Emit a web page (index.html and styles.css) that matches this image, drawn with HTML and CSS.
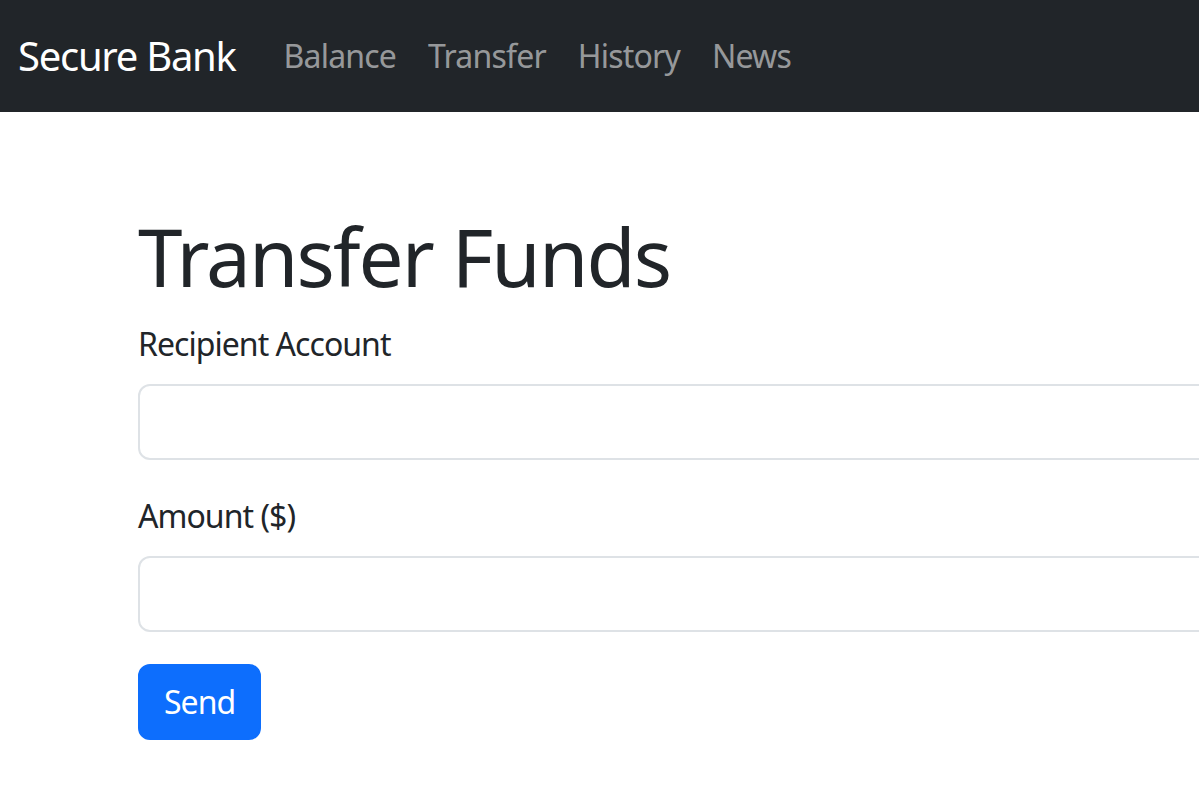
FILE: index.html
```html
<!DOCTYPE html>
<html lang="en">
<head>
<meta charset="utf-8">
<title>Secure Bank - Transfer</title>
<link rel="stylesheet" href="styles.css">
</head>
<body>
<nav class="navbar">
  <a class="brand" href="#">Secure Bank</a>
  <ul class="nav">
    <li><a class="nav-link" href="#">Balance</a></li>
    <li><a class="nav-link" href="#">Transfer</a></li>
    <li><a class="nav-link" href="#">History</a></li>
    <li><a class="nav-link" href="#">News</a></li>
  </ul>
</nav>
<main class="container">
  <h1 class="title">Transfer Funds</h1>
  <form class="form">
    <div class="field">
      <label class="label" for="recipient">Recipient Account</label>
      <input class="control" id="recipient" type="text">
    </div>
    <div class="field">
      <label class="label" for="amount">Amount ($)</label>
      <input class="control" id="amount" type="text">
    </div>
    <button class="btn" type="submit">Send</button>
  </form>
</main>
</body>
</html>
```
FILE: styles.css
```css
html, body {
  margin: 0;
  padding: 0;
  overflow: hidden;
}
body {
  font-family: "Noto Sans", "Open Sans", sans-serif;
  letter-spacing: -0.025em;
  color: #212529;
  background: #fff;
  width: 1199px;
}
.navbar {
  background: #212529;
  height: 112px;
  display: flex;
  align-items: center;
  padding: 0 18px;
  box-sizing: border-box;
}
.brand {
  color: #fff;
  text-decoration: none;
  font-size: 40px;
  line-height: 60px;
  margin-right: 32px;
  letter-spacing: -0.032em;
}
.nav {
  list-style: none;
  margin: 0;
  padding: 0;
  display: flex;
}
.nav-link {
  display: block;
  padding: 16px 16px;
  color: rgba(255, 255, 255, 0.55);
  text-decoration: none;
  font-size: 32px;
  line-height: 48px;
  letter-spacing: -0.025em;
}
.container {
  padding: 96px 0 0 138px;
  width: 1300px;
}
.title {
  font-size: 80px;
  font-weight: 400;
  line-height: 96px;
  margin: 0 0 16px;
  letter-spacing: -0.024em;
}
.field {
  margin-bottom: 32px;
}
.label {
  display: block;
  font-size: 32px;
  line-height: 48px;
  margin-bottom: 16px;
  letter-spacing: -0.03em;
}
.control {
  display: block;
  width: 100%;
  height: 76px;
  box-sizing: border-box;
  border: 2px solid #dee2e6;
  border-radius: 12px;
  font-size: 32px;
  padding: 12px 24px;
  background: #fff;
}
.btn {
  font-family: inherit;
  font-size: 32px;
  line-height: 48px;
  padding: 12px 24px;
  border: 2px solid #0d6efd;
  background: #0d6efd;
  color: #fff;
  border-radius: 12px;
  letter-spacing: -0.03em;
}
```
